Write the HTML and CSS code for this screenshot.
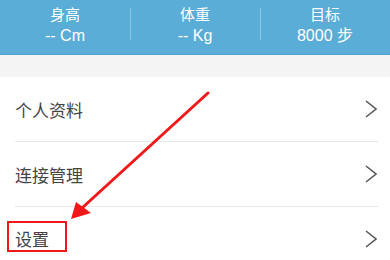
FILE: index.html
```html
<!DOCTYPE html>
<html lang="zh-CN">
<head>
    <meta charset="UTF-8">
    <meta name="viewport" content="width=device-width, initial-scale=1.0">
    <title>我的</title>
    <link rel="stylesheet" href="styles.css">
</head>
<body>
    <div class="page">
        <div class="stats">
            <div class="stat">
                <span class="stat-label">身高</span>
                <span class="stat-value">-- Cm</span>
            </div>
            <div class="stat">
                <span class="stat-label">体重</span>
                <span class="stat-value">-- Kg</span>
            </div>
            <div class="stat">
                <span class="stat-label">目标</span>
                <span class="stat-value">8000 步</span>
            </div>
        </div>

        <div class="spacer"></div>

        <ul class="menu">
            <li class="menu-item">
                <span>个人资料</span>
                <svg class="chevron" width="12" height="18" viewBox="0 0 12 18"><polyline points="1,1 11,9 1,17"/></svg>
            </li>
            <li class="menu-item">
                <span>连接管理</span>
                <svg class="chevron" width="12" height="18" viewBox="0 0 12 18"><polyline points="1,1 11,9 1,17"/></svg>
            </li>
            <li class="menu-item">
                <span class="mark">设置</span>
                <svg class="chevron" width="12" height="18" viewBox="0 0 12 18"><polyline points="1,1 11,9 1,17"/></svg>
            </li>
        </ul>

        <!-- annotation arrow -->
        <svg class="arrow" width="390" height="260" viewBox="0 0 390 260">
            <line x1="208" y1="93" x2="82" y2="208" stroke="#f01818" stroke-width="3" stroke-linecap="round"/>
            <polygon points="71,219 76,202 91,213" fill="#f01818"/>
        </svg>
    </div>
</body>
</html>
```

FILE: styles.css
```css
/* General Styles */
body {
    margin: 0;
    padding: 0;
    font-family: "Noto Sans CJK SC", "Liberation Sans", sans-serif;
    background: #ffffff;
}
.page {
    position: relative;
    width: 390px;
    height: 260px;
    overflow: hidden;
}
.stats {
    display: flex;
    height: 54px;
    background: #5aadd6;
    border-bottom: 1px solid #4f9fca;
}
.stat {
    flex: 1;
    display: flex;
    flex-direction: column;
    align-items: center;
    padding-top: 3px;
    color: #ffffff;
    font-size: 15px;
    line-height: 22px;
    position: relative;
}
.stat + .stat::before {
    content: "";
    position: absolute;
    left: 0;
    top: 8px;
    height: 32px;
    width: 1px;
    background: #8cc6e3;
}
.stat-value {
    font-family: "Liberation Sans", "Noto Sans CJK SC", sans-serif;
    font-size: 16px;
}
.spacer {
    height: 22px;
    background: #f4f4f4;
}
.menu {
    list-style: none;
    margin: 0;
    padding: 0 12px 0 15px;
}
.menu-item {
    display: flex;
    align-items: center;
    justify-content: space-between;
    height: 64px;
    border-bottom: 1px solid #e8e8e8;
    font-size: 17px;
    color: #444444;
}
.menu-item:last-child {
    border-bottom: none;
}
.chevron {
    fill: none;
    stroke: #555555;
    stroke-width: 1.5;
    margin-right: 1px;
}
.mark {
    margin-left: -8px;
    margin-bottom: 6px;
    padding: 4px 6px 0 6px;
    border: 2.5px solid #f01818;
    width: 44px;
    height: 23px;
    line-height: 23px;
}
.arrow {
    position: absolute;
    left: 0;
    top: 0;
    pointer-events: none;
}
```
